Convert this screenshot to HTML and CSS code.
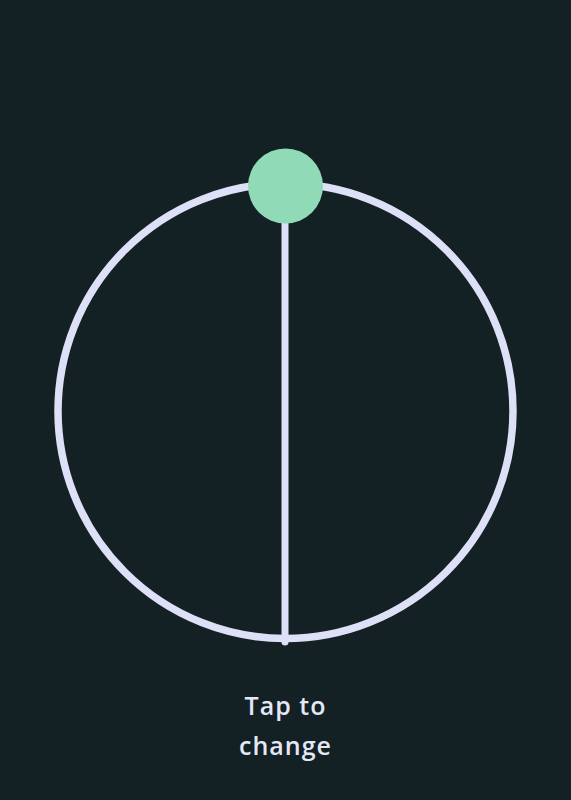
FILE: index.html
```html
<!DOCTYPE html>
<html>
<head>
<meta charset="utf-8">
<link rel="stylesheet" href="styles.css">
</head>
<body>
<main class="screen">
  <svg class="dial" width="571" height="685" viewBox="0 0 571 685">
    <circle cx="285.5" cy="411" r="227.5" fill="none" stroke="#dde0f6" stroke-width="7.5"/>
    <line x1="285" y1="186" x2="285" y2="642" stroke="#dde0f6" stroke-width="7" stroke-linecap="round"/>
    <circle cx="285.5" cy="186" r="37.5" fill="#91dab7"/>
  </svg>
  <p class="label">Tap to<br>change</p>
</main>
</body>
</html>
```
FILE: styles.css
```css
html, body {
  margin: 0;
  padding: 0;
  background: #132024;
}
.screen {
  width: 571px;
  height: 800px;
  display: flex;
  flex-direction: column;
  align-items: center;
  background: #132024;
}
.dial {
  display: block;
  flex: none;
}
.label {
  margin: 0;
  font-family: "Open Sans", "DejaVu Sans", sans-serif;
  font-size: 25px;
  font-weight: 600;
  line-height: 40px;
  color: #e4e7f6;
  text-align: center;
  letter-spacing: 1px;
}
```
